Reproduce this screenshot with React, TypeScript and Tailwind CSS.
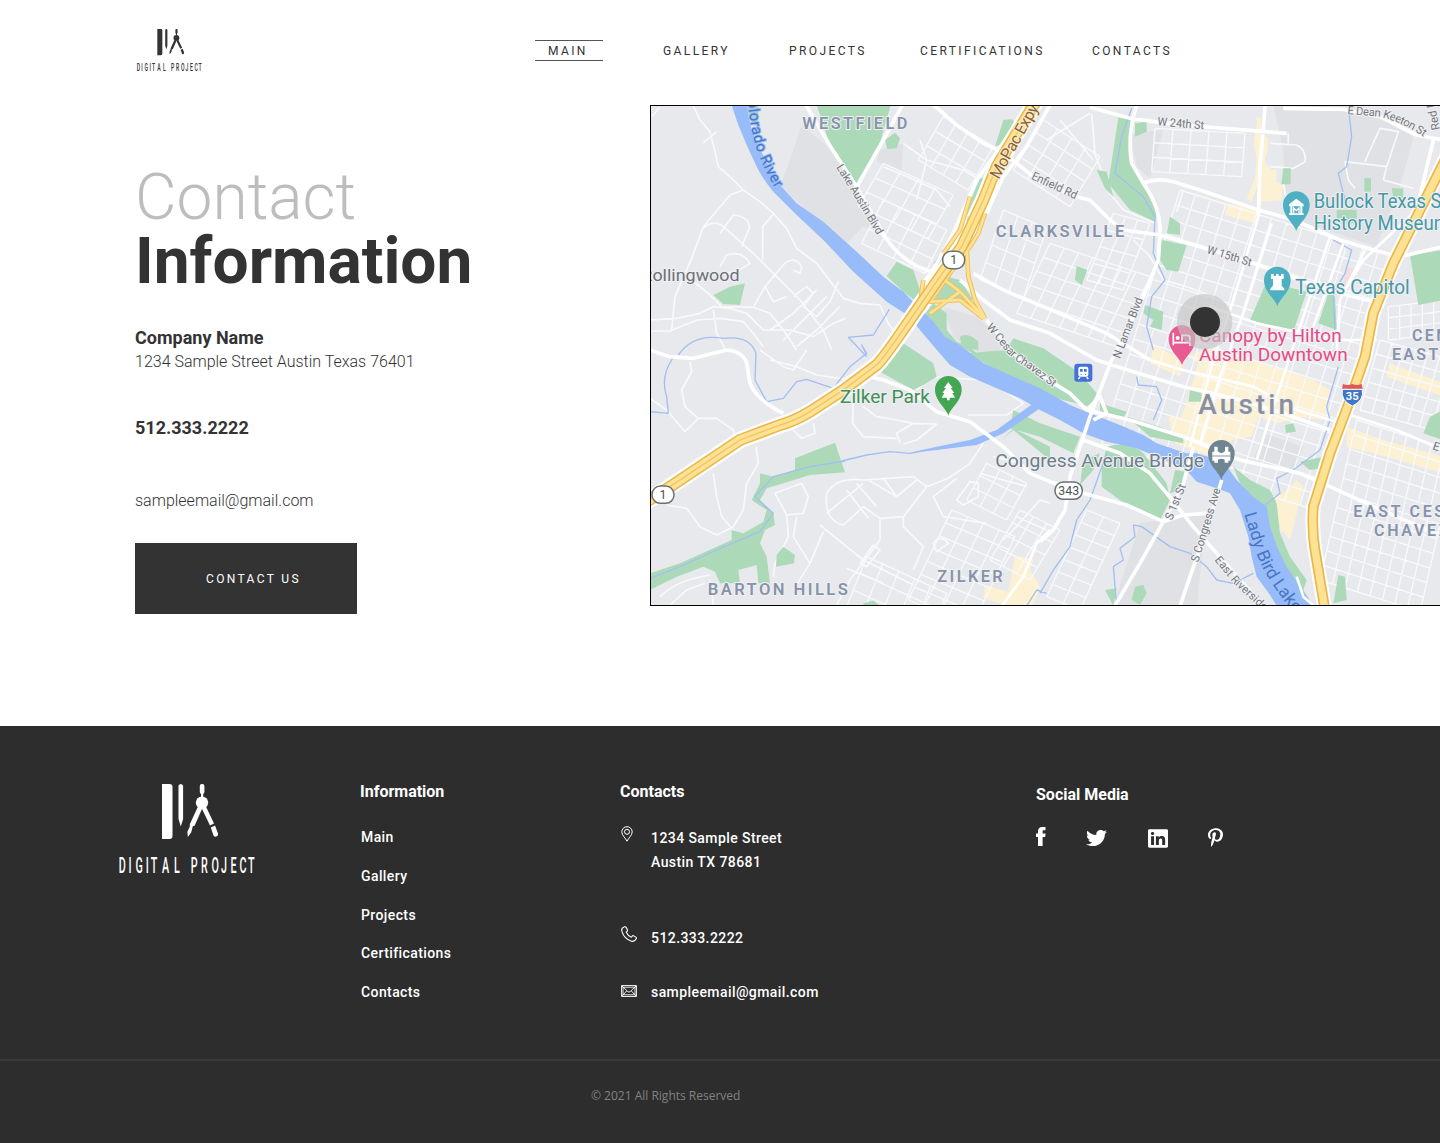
import React from "react";
import { FaTwitter, FaLinkedin, FaPinterestP } from "react-icons/fa";

/* ---------- Logo ---------- */

const logoLetters = "DIGITAL PROJECT";
const logoX = [-0.2, 9.6, 16.4, 26.8, 31.8, 43, 55, 64, 71.8, 82, 92.4, 102, 111.6, 120.6, 129];

function Logo({ className, ink }: { className: string; ink: string }) {
  return (
    <svg viewBox="0 0 137 90" className={className} fill={ink} overflow="visible">
      <path d="M43 0h7.500a3 3 0 0 1 3 3v49a3 3 0 0 1-3 3H43z" />
      <path d="M59.500 1.500q2.300-3 4.600 0v33.500l-2.300 7.500-2.300-7.500z" />
      <rect x="80.800" y="0" width="4.600" height="10" rx="2" />
      <rect x="82" y="8" width="2.200" height="6" />
      <circle cx="83" cy="18.600" r="6.200" />
      <path d="M79 22.500l4.200 2-7.600 17.200-1.800 0.600-1.600 6.200-3.400 4.400-0.400-5.200 2.300-4.900 0.200-2.700z" />
      <path d="M82.800 24.500l4-2.200 8.200 17.200-4 2z" />
      <path d="M91.800 43.400l4.200-2 3 8q0.500 2.300-1.600 3.200-2 0.600-3-1.400z" />
      <g transform="translate(0 88.500) scale(.5 1)">
        <text
          fontFamily="Roboto"
          fontSize="21.5"
          fontWeight="500"
          xmlSpace="preserve"
          x={logoX.map((v) => (v / 0.5).toFixed(1)).join(" ")}
          y="0"
        >
          {logoLetters}
        </text>
      </g>
    </svg>
  );
}

/* ---------- Map ---------- */

/** Street grid: lines running along (ax, ay) and (bx, by) from an origin. */
function grid(ox: number, oy: number, ax: number, ay: number, bx: number, by: number, rows: number, cols: number) {
  let d = "";
  for (let i = 0; i <= rows; i++) {
    const t = i / rows;
    d += `M${ox + bx * t} ${oy + by * t}l${ax} ${ay}`;
  }
  for (let j = 0; j <= cols; j++) {
    const t = j / cols;
    d += `M${ox + ax * t} ${oy + ay * t}l${bx} ${by}`;
  }
  return d;
}

const streetGrids = [
  grid(1590, 270, 640, 200, -235, 760, 17, 14),
  grid(2120, 960, 300, 95, -110, 480, 11, 8),
  grid(2190, 720, 250, 70, -60, 210, 5, 7),
  grid(2215, 620, 170, -20, 0, 100, 3, 5),
  grid(700, 190, 210, 95, -75, 130, 3, 4),
  grid(700, 300, 190, 90, -65, 130, 3, 4),
  grid(880, 50, 150, 90, -75, 130, 3, 4),
  grid(1180, 60, 170, 110, -90, 150, 4, 4),
  grid(1060, 330, 130, 55, -70, 210, 4, 3),
  grid(1200, 430, 300, 100, -100, 210, 5, 7),
  grid(1390, 340, 110, 30, -80, 200, 4, 3),
  grid(1515, 85, 270, 15, -10, 130, 3, 5),
  grid(905, 1230, 190, 80, -130, 270, 7, 4),
  grid(1010, 1090, 120, 60, -60, 110, 3, 3),
  grid(650, 1370, 240, 110, -60, 150, 3, 5),
  grid(1110, 1230, 120, 60, -90, 150, 4, 3),
  grid(1310, 1230, 100, 40, -120, 260, 7, 2),
];

const minorWest = [
  "M130 18L150 60 180 95 195 155 205 200 245 235 280 270 330 305 365 335 410 385 440 445 500 490 545 550 580 595 630 610 690 615 715 670 740 705",
  "M160 128L200 95M5 50L30 20",
  "M280 270L240 285 160 380 125 475 75 590 65 690",
  "M160 385Q185 360 215 375L260 415 320 470 400 550 450 600 520 690 545 750",
  "M210 400L250 345Q300 350 298 385L275 440",
  "M210 500L230 465Q275 450 300 490L260 515 220 520",
  "M125 540L180 585 215 620 310 622 345 560 395 500Q430 460 455 500L450 520 430 510",
  "M368 345L338 380V480",
  "M0 660L80 655 150 640 190 620 240 625 290 640 340 690 420 690 490 710 550 670 588 655",
  "M0 693H60L140 660 210 655 280 665 310 700 340 740",
  "M190 630L200 700 225 745M310 622L360 640 400 690 440 750",
  "M345 560L370 605 410 590M430 590L470 560 490 580 460 620 500 650 540 605 565 545",
  "M360 690L430 640 500 570M400 720L460 660 530 590M440 740L500 690 570 620",
  "M760 130L830 180 940 210 980 235M700 200L760 225 860 270 900 320M810 120L830 180 800 300",
];

const minorSouth = [
  "M120 35L125 65 95 120 105 170 145 205 200 205 250 240 255 260M145 205L105 245 50 180 0 145",
  "M318 290L325 340 290 400 280 480 250 530 200 555 150 530 110 475 50 465",
  "M190 370L200 440 215 500 250 540M425 235L455 265 495 250 490 220",
  "M610 150L608 220 640 260 740 265M750 280L740 250 790 220 860 222 800 270 760 282M640 170L680 200 740 210 790 220",
  "M840 80L1000 90 1060 120 1120 160 1070 195 955 195M780 0L830 40 840 85 800 120",
  "M330 0L400 50 430 60 470 0M360 30L440 50 500 75 600 90",
  "M375 430L455 400 475 440 460 490 410 495 375 430M410 495L415 560 375 640 370 680",
  "M530 430Q560 380 640 390L790 380 830 410 760 500 690 505 640 470 580 525Q520 510 530 430",
  "M590 420L655 505M620 400L680 470M655 390L740 440M530 490L640 400M700 385L740 440 800 390",
  "M830 410L895 385 960 340 1000 280M850 440L920 385M850 440L880 500 1010 520",
  "M920 450L960 395 985 400 985 440 940 465zM990 370L1130 410M1030 320L1110 340",
  "M510 525L590 590 640 630 790 705M440 500L430 560 480 640 430 720M520 545L480 640",
  "M690 505L690 570 600 690 560 765M760 500L760 530 820 590 790 660M590 655L700 700",
  "M630 640L670 585 690 600 650 650zM850 580Q870 550 895 580L860 605z",
  "M30 740Q80 690 180 675M60 765L110 720 165 700M180 690L190 765",
  "M1200 460L1170 450 1090 540 1060 570M1100 500L1190 540",
];

const minorNorth = [
  "M690 130L770 135Q800 150 795 185L760 205 690 200M745 100L745 130",
  "M915 185L1040 200 1075 95 1020 85 990 150 975 185M915 185L925 240 945 265M1030 240L1120 265M1040 200L1030 240",
  "M160 150L210 280 250 330 345 370M155 40L165 160M60 60L160 180M20 120L150 40",
  "M410 335L430 270M280 420L330 470 370 540 440 560 520 590M730 250L745 330",
];

const majors = [
  "M465 10L545 145 620 260 705 410Q760 495 860 520",
  "M760 10L700 120 620 260",
  "M845 10L920 75 1000 130 1045 150 1100 190 1170 245 1280 290 1320 300 1380 360 1420 390 1530 405 1650 440 1810 490 1950 540 2070 580 2170 605",
  "M1140 10L1045 150 980 240 910 400 855 500 820 550",
  "M1200 15L1130 140 1060 230 1010 340",
  "M1320 22L1440 55 1590 75 1810 92 1910 100",
  "M1462 10Q1430 100 1445 190L1480 250Q1530 320 1530 390L1525 480 1480 590 1385 780 1320 950 1260 1130 1245 1230 1210 1290 1170 1325",
  "M1846 10L1830 200 1825 350M1475 252Q1520 232 1570 245L1650 270 1810 325 1930 360 2070 420 2170 450 2250 470 2380 440",
  "M1900 25L2080 28 2190 50 2300 105 2380 120M2350 120L2300 330",
  "M1310 930L1350 890 1370 940 1330 960",
  "M930 540L1000 600 1080 660 1200 700 1340 780 1450 815 1600 860 1770 900 1900 940 2040 990",
  "M1010 660L1100 770 1180 830 1260 880 1310 930 1440 960 1600 1010 1770 1080 1950 1120 2040 1160 2170 1220 2380 1310",
  "M660 830L700 840 780 870 860 935 960 965 1060 1040 1140 1120 1200 1145 1300 1180 1430 1215 1540 1265 1600 1245 1670 1240",
  "M0 750L60 770 130 775 230 750Q280 755 290 790L300 850Q320 900 400 940",
  "M1300 1020L1410 1060 1500 1120 1550 1180 1630 1280 1700 1360 1770 1440 1840 1518",
  "M1630 1040L1600 1150 1540 1265 1470 1390 1390 1525M1715 1140L1670 1290 1620 1430 1588 1525",
  "M970 520L1060 570 1180 620 1370 700 1500 780",
];

const midRoads = [
  "M1825 350L1750 600 1690 780 1620 1040M1865 370L1780 640 1710 830 1650 1030",
  "M2040 410L1950 680 1860 950 1820 1080M2080 430L1990 680M2145 450L2070 600 2060 760",
  "M1680 620L1820 670 1960 700 2070 720 2180 720M1500 780L1600 810 1810 860 1940 930 2060 965",
  "M2300 330L2140 480 2080 580M2100 945L2240 990 2380 1050",
  "M1050 1525L1120 1430 1160 1330 1200 1290M1940 1430L1960 1490 2000 1525",
];

const parks = [
  "M285 15h40v70L305 70z",
  "M500 15H722L690 130 620 255 545 150z",
  "M705 120L735 98 750 115 740 145 712 148z",
  "M1060 60L1085 58 1110 80 1060 130 1035 140z",
  "M190 585L240 560 285 550 270 615 220 612z",
  "M740 485L790 510 810 570 800 605 760 575 710 528z",
  "M990 235L1020 230 950 400 880 500 850 490 920 400z",
  "M850 610L890 640 890 690 920 725 960 740 1000 780 850 690 815 655z",
  "M850 520L930 540 970 600 850 600z",
  "M930 710Q955 695 985 725L985 750 935 740z",
  "M1090 715L1180 745 1290 820 1340 880 1320 920 1200 890 1100 845 950 760 1070 750z",
  "M760 730L850 790 860 830 820 855 790 870 680 810z",
  "M1405 52L1445 60Q1430 160 1470 240L1520 330 1515 365 1440 330 1375 250z",
  "M1455 70L1490 65 1490 95 1455 110z",
  "M1340 210L1370 215 1390 290 1365 265z",
  "M1560 350L1590 370 1590 405 1550 400z",
  "M1535 420L1610 435 1585 515 1550 510 1530 480z",
  "M1280 498L1312 510 1295 555 1275 540z",
  "M1900 205h22v48h-28zM2143 235h20v40h-20zM2060 330h60v40h-60zM2225 265h35v30h-30z",
  "M2280 465L2380 450V600L2305 615z",
  "M1850 545L1970 575 1930 695 1800 660z",
  "M2035 580L2055 590 2060 690 2005 670z",
  "M1485 615L1540 635 1535 690 1500 680 1510 660 1480 640z",
  "M1350 910L1430 935 1420 955 1350 940z",
  "M1170 970L1290 1010 1270 1060 1170 1010 1080 985 1090 930z",
  "M1090 985L1200 1040 1200 1080 1090 990 1055 1020z",
  "M1370 1040Q1440 1020 1480 1060L1550 1150 1560 1200 1530 1260 1430 1215 1355 1160 1355 1100z",
  "M1300 1080L1350 1060 1330 1110 1290 1155z",
  "M1575 1110L1610 1115 1590 1170 1560 1180z",
  "M1620 870h35v35h-40zM1905 975l25-5 8 25-30 4zM1950 1085L2020 1070 2020 1105 1980 1110z",
  "M1430 950L1530 980 1600 1010 1600 1030 1500 1010z",
  "M1750 1100L1800 1140 1860 1170 1880 1210 1890 1300 1920 1370 1970 1440 1960 1470 1990 1518 1940 1480 1850 1340 1840 1230 1770 1150z",
  "M2065 1425L2085 1430 2090 1500 2050 1510z",
  "M2340 950L2380 930V1020L2320 1000z",
  "M1455 1460L1480 1455 1490 1480 1470 1515 1445 1500zM1365 1470L1400 1465 1390 1518z",
  "M435 1075L555 1028 585 1117 480 1125 400 1150 350 1165 330 1200 370 1240 375 1275 345 1290 330 1330 350 1370 360 1450 325 1450 320 1395 265 1410 270 1450 210 1450 195 1415 160 1400 80 1430 0 1470V1420L90 1390 200 1340 245 1320 245 1290 280 1300 340 1265 350 1230 305 1200 330 1150 330 1120 370 1130 435 1110z",
  "M380 1365L400 1340 435 1365 432 1390 378 1400z",
  "M640 1510L670 1502 690 1518H640z",
];

const river =
  "M243 10L265 75 290 135 320 200Q340 240 370 275L440 345 520 420 610 515 710 605 780 650 810 690 865 755 900 795 960 830 1040 865 1110 895 1170 930 1230 960 1300 1000 1370 1025 1460 1045 1520 1070 1600 1100 1640 1145 1700 1165 1740 1180 1770 1230 1795 1310 1805 1370 1820 1430 1860 1485 1885 1525H1995L1950 1460 1910 1400 1885 1350 1860 1280 1850 1220 1810 1190 1760 1140 1720 1085 1640 1060 1610 1060 1520 1030 1480 1005 1410 975 1320 940 1260 915 1170 865 1080 825 1000 790 930 735 885 710 850 665 800 615 760 575 700 530 620 455 520 365 440 310 390 255 345 180 305 90 288 10z";

const creeks = [
  "M85 765Q130 700 220 715 300 705 318 760L315 840 350 905 400 895 440 845 470 838 550 865 600 800 650 760 635 735 650 765",
  "M718 628L670 705 595 712 650 770",
  "M68 775Q30 830 50 890L55 940 0 935",
  "M575 1083L650 1065 720 1055 780 1060 860 1045",
  "M585 1083L480 1100 370 1130 315 1190 370 1240 330 1295 200 1350 90 1400 0 1435",
  "M1445 25L1415 110 1395 220 1480 290 1515 350 1510 460 1545 540 1505 590 1490 680 1510 750M1460 830L1465 855 1520 860 1535 900 1510 960",
  "M2095 20L2105 110 2090 200 2065 220 2090 320M2050 420L2105 450 2085 520 2050 580 2055 690M2065 800L2030 920 2040 960 2010 1050 1930 1110 1880 1135 1890 1180 1840 1220",
  "M1370 1060L1320 1200 1280 1260 1260 1340 1210 1410 1170 1480",
  "M1450 1275L1475 1280 1560 1340 1620 1360 1670 1400 1700 1440 1750 1450 1810 1420M1450 1275L1455 1310 1410 1345 1420 1380 1390 1400 1395 1460 1400 1518",
  "M1130 1518L1160 1470 1190 1480",
];

const yellows = [
  "M1815 50l20 5-5 45 25 15-2 40-10 30 22 25 15 0-2 35 20 10-3 45-60 5-10-10 5-60-25 70-15-10 25-60 5-60-10-50 12-60z",
  "M1735 310l90 20-10 40-90-25z",
  "M1510 735l90 45-10 50-90-40z",
  "M1690 740l120 40 180 60 50 30-15 90-80-10-60 20-60-20-20 60-60 10-30 60-140-50-20-80 40 0 20-60 30-100-30-20z",
  "M2220 790l160 60v40l-170-60zM2090 980l110 40 180 50v50l-170-50-120-30z",
  "M1900 1180l40-40 20 20-40 160-20-25-30-5 10-35-20-45 10-20z",
  "M1095 1365l55 15-10 30 30 50-20 55h-80l-70-20 5-40 70 20 10-50z",
];

const mopac = "M1160 0L1040 200 1000 300 935 440 870 530 790 645 745 710Q700 775 680 795L580 870 480 935Q430 965 390 975L270 1020 150 1100 60 1160-10 1205";
const i35 = "M2400 150L2310 330 2230 490 2170 640 2145 770 2100 900 2040 1060 1990 1220Q1985 1290 1995 1350L2025 1530";
const ramps = [
  "M960 350L950 440 955 530 975 600 1005 655",
  "M1005 340L985 400 960 440 900 520 840 605 930 600 1000 655",
  "M870 530L930 575 1000 650M930 575L840 640M820 540L810 610M960 290L930 390 880 460",
];

const shade = [
  "M455 75L545 150 620 260 700 400 640 380 590 430 390 260 420 180z",
  "M880 620L980 650 1060 720 1040 770 960 750 910 710z",
  "M690 150L760 130 755 215 680 185z",
  "M1870 18H2120L2290 110 2250 260 2180 440 1910 350 1900 150z",
  "M1440 100L1540 90 1500 235 1460 200z",
  "M1840 1000L1960 1040 1930 1120 1810 1080z",
  "M1470 1270L1670 1240 1640 1518H1390z",
];

const pinPath = "M0 0C-4-22-40-42-40-80a40 40 0 1 1 80 0C40-42 4-22 0 0z";

type LabelProps = {
  x: number;
  y: number;
  size: number;
  width?: number;
  fill: string;
  weight?: number;
  spacing?: number;
  rotate?: number;
  children: React.ReactNode;
};

function Label({ x, y, size, width, fill, weight = 400, spacing = 0, rotate = 0, children }: LabelProps) {
  return (
    <text
      transform={`translate(${x} ${y}) rotate(${rotate})`}
      fontSize={size}
      fontWeight={weight}
      fill={fill}
      letterSpacing={spacing}
      textLength={width}
      lengthAdjust="spacingAndGlyphs"
      stroke="#eff0f3"
      strokeWidth="6"
      strokeLinejoin="round"
      paintOrder="stroke"
    >
      {children}
    </text>
  );
}

function PathLabel({ id, d, size, fill, halo = "#eff0f3", weight = 400, length, children }: {
  id: string;
  d: string;
  size: number;
  fill: string;
  halo?: string;
  weight?: number;
  length?: number;
  children: string;
}) {
  return (
    <>
      <path id={id} d={d} fill="none" />
      <text fontSize={size} fill={fill} fontWeight={weight} stroke={halo} strokeWidth="6" strokeLinejoin="round" paintOrder="stroke" textLength={length}>
        <textPath href={`#${id}`}>{children}</textPath>
      </text>
    </>
  );
}

function Shield({ x, y, w, children }: { x: number; y: number; w: number; children: string }) {
  return (
    <g transform={`translate(${x} ${y})`}>
      <rect x={-w / 2} y="-26" width={w} height="52" rx="25" fill="#fff" stroke="#6c7075" strokeWidth="4.5" />
      <text textAnchor="middle" y="13" fontSize="37" fontWeight="400" fill="#4d5156">
        {children}
      </text>
    </g>
  );
}

const area = "#8793aa";
const road = "#73777d";
const teal = "#4598a4";
const pink = "#e54b86";

function AustinMap() {
  return (
    <svg viewBox="3 18 2367 1497" className="block h-full w-full" fontFamily="Roboto" preserveAspectRatio="none">
      <rect x="-10" y="0" width="2400" height="1530" fill="#e8e9ed" />
      <path d={shade.join("")} fill="#e0e1e5" />
      <path d={yellows.join("")} fill="#fcf1d2" />
      <g fill="none" stroke="#f8f9fb" strokeLinejoin="round">
        <path d={streetGrids.join("")} strokeWidth="4" />
        <path d={minorWest.join("")} strokeWidth="5" />
        <path d={minorSouth.join("")} strokeWidth="5" transform="translate(0 750)" />
        <path d={minorNorth.join("")} strokeWidth="5" transform="translate(1170 0)" />
      </g>
      <path d={parks.join("")} fill="#acdab8" />
      <path d="M2090 505h28v45l-25 20-15-20z" fill="#f6dcdc" />
      <path d={creeks.join("")} fill="none" stroke="#a3bff0" strokeWidth="4" strokeLinejoin="round" />
      <path d={river} fill="#98bcf9" />
      <path d="M1150 910L1040 990 960 1020 860 1040 780 1058 860 1050 980 1035 1060 1000 1170 925z" fill="#98bcf9" />
      <path d={midRoads.join("")} fill="none" stroke="#fff" strokeWidth="8" strokeLinejoin="round" />
      <path d={majors.join("")} fill="none" stroke="#fff" strokeWidth="11" strokeLinejoin="round" />
      <g fill="none" strokeLinejoin="round">
        <path d={mopac} stroke="#fff" strokeWidth="50" />
        <path d={i35} stroke="#fff" strokeWidth="44" />
        <path d={ramps.join("")} stroke="#eec05e" strokeWidth="14" />
        <path d={ramps.join("")} stroke="#fde293" strokeWidth="8" />
        <path d={mopac} stroke="#eab54b" strokeWidth="36" />
        <path d={mopac} stroke="#fde293" strokeWidth="27" />
        <path d={mopac} stroke="#efc566" strokeWidth="4" />
        <path d={i35} stroke="#eab54b" strokeWidth="32" />
        <path d={i35} stroke="#fde293" strokeWidth="22" />
      </g>

      {/* districts */}
      <Label x={457} y={88} size={48} width={322} spacing={7} weight={600} fill={area}>WESTFIELD</Label>
      <Label x={1037} y={411} size={48} width={393} spacing={7} weight={600} fill={area}>CLARKSVILLE</Label>
      <Label x={862} y={1447} size={48} width={203} spacing={7} weight={600} fill={area}>ZILKER</Label>
      <Label x={173} y={1484} size={48} width={428} spacing={7} weight={600} fill={area}>BARTON HILLS</Label>
      <Label x={2286} y={722} size={48} spacing={7} weight={600} fill={area}>CENTRAL</Label>
      <Label x={2226} y={779} size={48} spacing={7} weight={600} fill={area}>EAST AUSTIN</Label>
      <Label x={2110} y={1250} size={48} spacing={8} weight={600} fill={area}>EAST CESAR</Label>
      <Label x={2172} y={1308} size={48} spacing={8} weight={600} fill={area}>CHAVEZ</Label>
      <Label x={1645} y={943} size={82} width={296} spacing={9} weight={500} fill="#8a8f99">Austin</Label>
      <Label x={-26} y={543} size={52} width={295} fill="#6c7076">Rollingwood</Label>

      {/* roads and water */}
      <PathLabel id="colorado" d="M288-30L301 66Q318 185 399 300" size={45} length={312} fill="#4674c6" halo="#98bcf9">Colorado River</PathLabel>
      <PathLabel id="ladybird" d="M1783 1242L1815 1350Q1850 1450 1960 1570" size={52} fill="#4674c6" halo="#98bcf9">Lady Bird Lake</PathLabel>
      <PathLabel id="mopac" d="M1046 240L1182-4" size={48} length={248} fill="#86623f" halo="#fdeec4">MoPac Expy</PathLabel>
      <PathLabel id="lakeaustin" d="M558 202L610 285 690 420" size={34} length={238} fill={road}>Lake Austin Blvd</PathLabel>
      <PathLabel id="cesar" d="M1008 682L1075 762Q1100 787 1130 802L1225 874" size={34} length={272} fill={road}>W Cesar Chavez St</PathLabel>
      <PathLabel id="keeton" d="M2092 42L2190 50Q2270 70 2345 128" size={34} length={243} fill={road}>E Dean Keeton St</PathLabel>
      <PathLabel id="riverside" d="M1693 1380L1750 1450 1870 1560" size={34} fill={road}>East Riverside Dr</PathLabel>
      <Label x={1142} y={236} size={35} width={147} rotate={25} fill={road}>Enfield Rd</Label>
      <Label x={1410} y={777} size={35} width={192} rotate={-69} fill={road}>N Lamar Blvd</Label>
      <Label x={1522} y={76} size={35} width={140} rotate={5} fill={road}>W 24th St</Label>
      <Label x={1669} y={459} size={35} width={138} rotate={17} fill={road}>W 15th St</Label>
      <Label x={2370} y={88} size={35} rotate={-102} fill={road}>Red River St</Label>
      <Label x={1566} y={1262} size={35} width={112} rotate={-68} fill={road}>S 1st St</Label>
      <Label x={1645} y={1388} size={35} width={230} rotate={-73} fill={road}>S Congress Ave</Label>
      <Label x={2346} y={1048} size={35} rotate={18} fill={road}>E 7th St</Label>

      {/* places */}
      <Label x={1991} y={324} size={58} width={478} fill={teal}>Bullock Texas State</Label>
      <Label x={1991} y={391} size={58} width={409} fill={teal}>History Museum</Label>
      <Label x={1936} y={583} size={58} width={343} fill={teal}>Texas Capitol</Label>
      <Label x={1647} y={725} size={57} width={428} fill={pink}>Canopy by Hilton</Label>
      <Label x={1647} y={782} size={57} width={446} fill={pink}>Austin Downtown</Label>
      <Label x={570} y={909} size={57} width={270} fill="#3f8f56">Zilker Park</Label>
      <Label x={1036} y={1102} size={57} width={626} fill="#6d7d89">Congress Avenue Bridge</Label>

      <g transform="translate(1939 394)">
        <path d={pinPath} fill="#4fb0c3" />
        <path d="M-22-81L0-98l22 17v6h-44zM-18-76h6v24h-6zM12-76h6v24h-6zM-22-54h44v5h-44z" fill="#fff" />
        <path d="M-8-55v-15l8 8 8-8v15" fill="none" stroke="#fff" strokeWidth="4" />
      </g>
      <g transform="translate(1882 620)">
        <path d={pinPath} fill="#4fb0c3" />
        <path d="M-19-98h8v6h7v-6h8v6h7v-6h8v15h-6v20l8 9v5h-42v-5l8-9v-20h-6z" fill="#fff" />
      </g>
      <g transform="translate(1596 796)">
        <path d={pinPath} fill="#e95a92" />
        <path d="M-26-98v38M-26-68h50M24-68v10M24-72v-10q0-8-8-8h-16v18" fill="none" stroke="#fff" strokeWidth="5" />
        <circle cx="-13" cy="-82" r="6" fill="#fff" />
      </g>
      <g transform="translate(895 948)">
        <path d={pinPath} fill="#43a653" />
        <path d="M0-102l13 18h-6l11 15h-6l8 14H4v8h-8v-8h-16l8-14h-6l11-15h-6z" fill="#fff" />
      </g>
      <g transform="translate(1714 1140)">
        <path d={pinPath} fill="#6f8592" />
        <path d="M-21-100h10v13q11 13 22 0v-13h10v15h6v27h-6v6h-11v-9q-10-6-20 0v9h-11v-6h-6v-27h6z" fill="#fff" />
        <path d="M-27-72h54" stroke="#6f8592" strokeWidth="2.500" />
      </g>
      <g transform="translate(1300 818)">
        <rect x="-27" y="-27" width="54" height="54" rx="9" fill="#4472d8" />
        <rect x="-15" y="-18" width="30" height="30" rx="6" fill="#fff" />
        <path d="M-10-11H-2v8h-8zM2-11h8v8H2z" fill="#4472d8" />
        <path d="M-8 5h3M5 5h3" stroke="#4472d8" strokeWidth="4" />
        <path d="M-10 13l-5 6M10 13l5 6" stroke="#fff" strokeWidth="4" />
      </g>
      <g transform="translate(2107 884)">
        <path d="M-30-16h60q6 34-30 50-36-16-30-50z" fill="#3f78c9" stroke="#fff" strokeWidth="3" />
        <path d="M-28-32q14 6 28 0 14 6 28 0l3 14h-62z" fill="#dd5a56" />
        <text textAnchor="middle" y="17" fontSize="34" fontWeight="600" fill="#fff">35</text>
      </g>
      <Shield x={911} y={480} w={66}>1</Shield>
      <Shield x={39} y={1184} w={66}>1</Shield>
      <Shield x={1256} y={1172} w={82}>343</Shield>

      <circle cx="1664" cy="665" r="83" fill="#c4c4c4" fillOpacity=".62" />
      <circle cx="1665" cy="666" r="45" fill="#333" />
    </svg>
  );
}

/* ---------- Icons ---------- */

function PinIcon() {
  return (
    <svg viewBox="0 0 12 16" className="mt-px ml-px h-4 w-3" fill="none" stroke="#fff" strokeWidth="1">
      <path d="M6 15.200C4.500 12 .8 9.300.8 5.900a5.200 5.200 0 0 1 10.400 0C11.200 9.300 7.500 12 6 15.200z" />
      <circle cx="6" cy="5.800" r="2.500" />
    </svg>
  );
}

function PhoneIcon() {
  return (
    <svg viewBox="0 0 16 16" className="size-4" fill="none" stroke="#fff" strokeWidth="1.1" strokeLinejoin="round">
      <path d="M3.600.8C1.400 1.500.3 3.200.9 5.400c1.400 4.600 5 8.300 9.500 9.800 2.200.6 4-.5 5-2.600.3-.7-.1-1.200-.6-1.500l-2-1.200c-.7-.4-1.300-.2-1.700.4l-.7 1c-2.300-.9-4.200-2.800-5.300-5.200l1-.8c.6-.5.6-1 .3-1.600L5.200 1.400C4.800.8 4.300.6 3.600.8z" />
    </svg>
  );
}

function MailIcon() {
  return (
    <svg viewBox="0 0 16 12" className="h-3 w-4" fill="none" stroke="#fff" strokeWidth=".9" strokeLinejoin="round">
      <rect x=".5" y=".5" width="15" height="11" />
      <path d="M1 1l5.800 5.600q1.200 1 2.400 0L15 1M1 11l4.600-5M15 11l-4.600-5M2 2.200h12M2 9.800h12M2 2v8M14 2v8" />
    </svg>
  );
}

function FacebookIcon() {
  return (
    <svg viewBox="0 0 10 19" className="h-[19px] w-2.5" fill="currentColor">
      <path d="M2 19V10H0V6.600h2V4.600C2 1.600 3.400 0 6.200 0h3.300v3.300H7.700C6.700 3.300 6.600 3.700 6.600 4.600v2h3L9.200 10H6.600v9z" />
    </svg>
  );
}

/* ---------- Page ---------- */

const footerLinks = ["Main", "Gallery", "Projects", "Certifications", "Contacts"];

export default function App() {
  return (
    <div className="flex h-[1143px] w-[1440px] flex-col overflow-hidden bg-white font-['Roboto',sans-serif] text-[#333]">
      <header className="flex h-[105px] shrink-0 pl-[136px]">
        <Logo className="mt-[29px] h-[43px] w-[67px]" ink="#333" />
        <nav className="ml-[332px] mt-10 grid h-[21px] grid-cols-[128px_126px_131px_172px_auto] items-start text-xs leading-[23px] tracking-[2.4px]">
          <a className="h-[21px] w-[68px] border-y border-[#555] pl-[13px] leading-[21px]">MAIN</a>
          <a>GALLERY</a>
          <a>PROJECTS</a>
          <a>CERTIFICATIONS</a>
          <a>CONTACTS</a>
        </nav>
      </header>

      <main className="flex h-[621px] shrink-0 items-start">
        <section className="w-[650px] pl-[135px] pt-[61px]">
          <h1 className="text-[64px] leading-[64px]">
            <span className="block font-light text-[#bdbdbd]">Contact</span>
            <span className="block font-bold">Information</span>
          </h1>
          <p className="mt-8 text-lg leading-6 font-bold">Company Name</p>
          <p className="text-base leading-6 font-light">1234 Sample Street Austin Texas 76401</p>
          <p className="mt-[42px] text-lg leading-6 font-bold">512.333.2222</p>
          <p className="mt-[49px] text-base leading-6 font-light">sampleemail@gmail.com</p>
          <button className="mt-[30px] flex h-[71px] w-[222px] items-center justify-center bg-[#333] pl-[15px] text-xs tracking-[2.350px] text-white">
            CONTACT US
          </button>
        </section>
        <section className="h-[501px] w-[790px] overflow-hidden border-y border-l border-black">
          <AustinMap />
        </section>
      </main>

      <footer className="flex grow flex-col bg-[#2d2d2d] text-white">
        <div className="flex h-[333px] items-start pt-[54px]">
          <div className="w-[360px] pl-[119px] pt-1">
            <Logo className="h-[90px] w-[137px]" ink="#fff" />
          </div>
          <div className="w-[260px]">
            <h2 className="text-base leading-6 font-bold">Information</h2>
            <ul className="mt-[14px] pl-px text-sm leading-[38.8px] font-medium tracking-[0.4px]">
              {footerLinks.map((l) => (
                <li key={l}>{l}</li>
              ))}
            </ul>
          </div>
          <div className="w-[416px]">
            <h2 className="text-base leading-6 font-bold">Contacts</h2>
            <div className="mt-[21px] grid grid-cols-[31px_auto] text-sm leading-6 font-medium tracking-[0.42px]">
              <PinIcon />
              <p className="pt-px">
                1234 Sample Street
                <br />
                Austin TX 78681
              </p>
              <div className="mt-[52px] pl-px">
                <PhoneIcon />
              </div>
              <p className="mt-[52px]">512.333.2222</p>
              <div className="mt-[35px] pl-px">
                <MailIcon />
              </div>
              <p className="mt-[30px]">sampleemail@gmail.com</p>
            </div>
          </div>
          <div>
            <h2 className="mt-[3px] text-base leading-6 font-bold">Social Media</h2>
            <div className="mt-5 grid grid-cols-[50px_62px_60px_auto] items-start">
              <FacebookIcon />
              <FaTwitter className="mt-px h-5 w-[21px]" preserveAspectRatio="none" />
              <FaLinkedin className="mt-px h-[21px] w-5" preserveAspectRatio="none" />
              <FaPinterestP className="mt-px h-[19px] w-[15px]" preserveAspectRatio="none" />
            </div>
          </div>
        </div>
        <div className="border-t-2 border-[#383838] pl-[591px] pt-[26px] font-['Open_Sans',sans-serif] text-xs leading-[18px] text-[#828282]">
          © 2021 All Rights Reserved
        </div>
      </footer>
    </div>
  );
}
